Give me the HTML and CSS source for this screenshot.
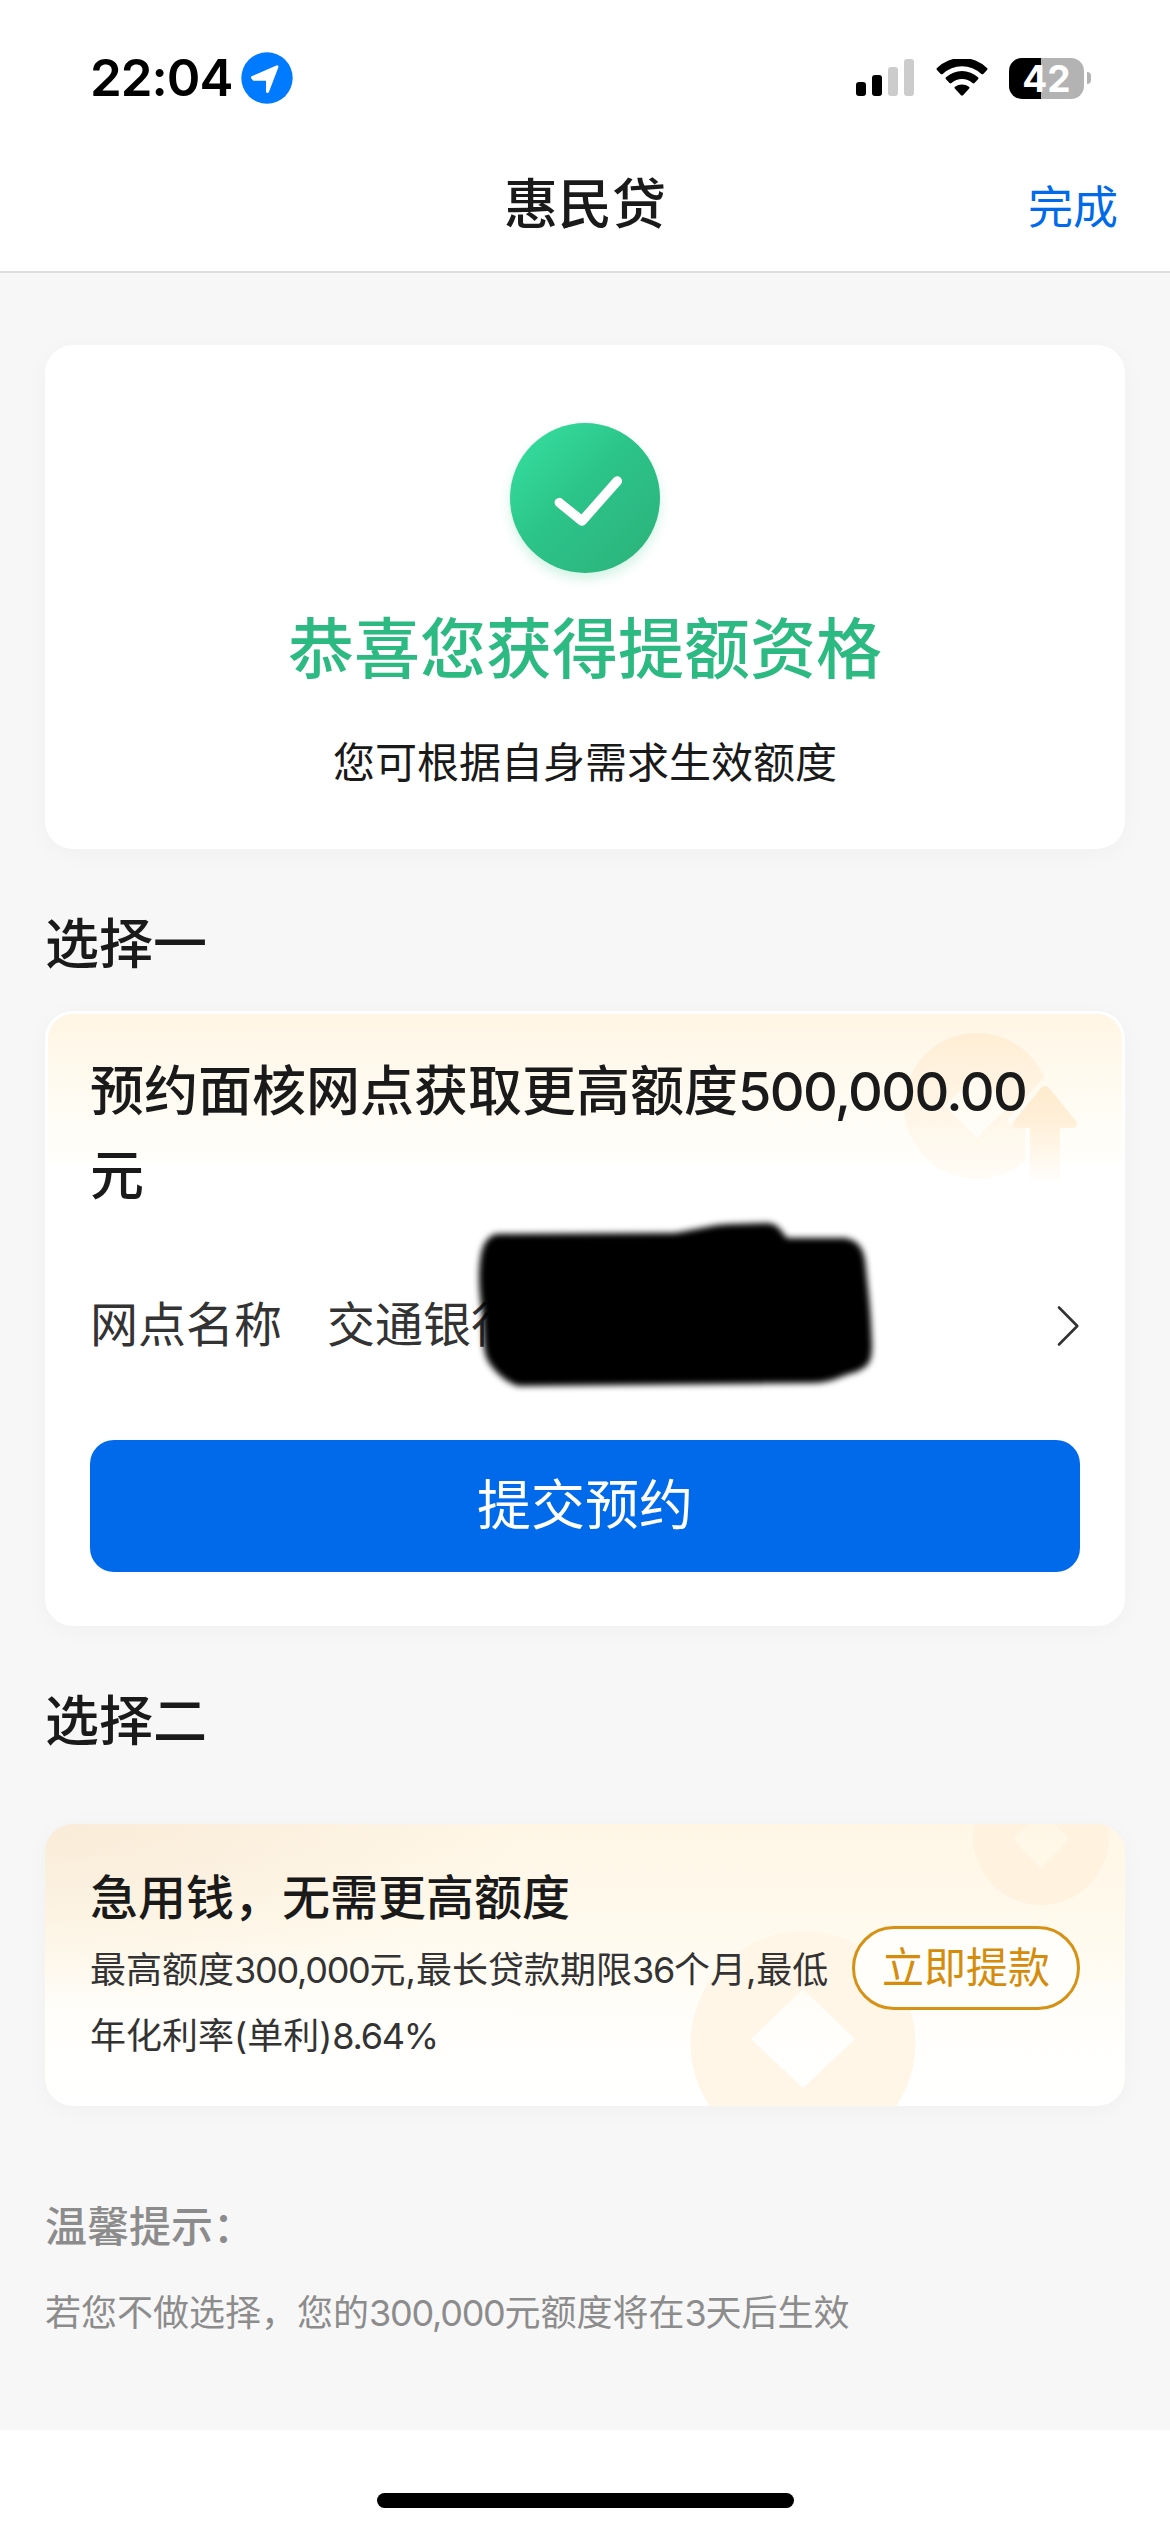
FILE: index.html
```html
<!DOCTYPE html>
<html lang="zh-CN">
<head>
<meta charset="utf-8">
<title>惠民贷</title>
<link rel="stylesheet" href="styles.css">
</head>
<body>
<header class="header">
  <div class="status">
    <div class="status-left">
      <span class="time">22:04</span>
      <svg class="location" width="52" height="52" viewBox="0 0 52 52">
        <circle cx="26" cy="26" r="25.7" fill="#007aff"/>
        <path d="M11.5 25.5 36 14.8 26.5 39.5V27.3H13Z" fill="#fff" stroke="#fff" stroke-width="3" stroke-linejoin="round"/>
      </svg>
    </div>
    <div class="status-right">
      <svg width="58" height="38" viewBox="0 0 58 38">
        <rect x="0" y="23" width="10" height="14" rx="3"/>
        <rect x="16" y="16" width="10" height="21" rx="3"/>
        <rect x="32" y="8" width="10" height="29" rx="3" fill="#ccc"/>
        <rect x="48" y="0" width="10" height="37" rx="3" fill="#ccc"/>
      </svg>
      <svg class="wifi" width="52" height="38" viewBox="0 0 52 38">
        <path d="M1 11Q0 10 1 9A36 36 0 0 1 51 9Q52 10 51 11L47.300 14.900Q46.300 15.800 45.300 14.900A28 28 0 0 0 6.700 14.900Q5.700 15.800 4.700 14.900Z"/>
        <path d="M10 20.300Q9 19.200 10 18.300A23.500 23.500 0 0 1 42 18.300Q43 19.200 42 20.300L38.500 24Q37.500 24.800 36.500 24A16 16 0 0 0 15.500 24Q14.500 24.800 13.500 24Z"/>
        <path d="M18.800 29.500Q17.900 28.500 19 27.800A12 12 0 0 1 33 27.800Q34.100 28.500 33.200 29.500L27 36.300Q26 37.200 25 36.300Z"/>
      </svg>
      <div class="battery"><span class="battery-body">42</span><i class="battery-cap"></i></div>
    </div>
  </div>
  <nav class="nav">
    <h1 class="nav-title">惠民贷</h1>
    <a class="nav-done">完成</a>
  </nav>
</header>

<main class="main">
  <section class="card result">
    <div class="result-icon">
      <svg width="150" height="150" viewBox="0 0 150 150"><path d="M49.300 79.600 72 98 107.300 58" fill="none" stroke="#fff" stroke-width="9.500" stroke-linecap="round" stroke-linejoin="round"/></svg>
    </div>
    <h2 class="result-title">恭喜您获得提额资格</h2>
    <p class="result-text">您可根据自身需求生效额度</p>
  </section>

  <h2 class="section-title first">选择一</h2>
  <section class="card booking">
    <svg class="decor" width="1080" height="180" viewBox="0 0 1080 180">
      <defs>
        <linearGradient id="coin" x1="0" y1="0" x2="0" y2="1"><stop offset="0" stop-color="#ffeed5"/><stop offset="1" stop-color="#fffcf6"/></linearGradient>
        <linearGradient id="arrow" x1="0" y1="0" x2="0" y2="1"><stop offset="0" stop-color="#ffebce"/><stop offset=".4" stop-color="#fff0da"/><stop offset="1" stop-color="#fffefb"/></linearGradient>
        <mask id="cut"><rect width="1080" height="180" fill="#fff"/><path d="M1000 72 1032 109H1015V175H985V109H968Z" fill="#000" stroke="#000" stroke-width="10" stroke-linejoin="round"/></mask>
      </defs>
      <path mask="url(#cut)" fill="url(#coin)" fill-rule="evenodd" d="M932 22a73 73 0 1 1 0 146a73 73 0 1 1 0-146ZM932 63 900 95 932 127 964 95Z"/>
      <path fill="url(#arrow)" d="M996 77Q1000 73 1004 77L1031 110Q1034 117 1027 117H1015V170H985V117H973Q966 117 969 110Z"/>
    </svg>
    <h3 class="booking-title">预约面核网点获取更高额度<span class="num">500,000.00</span><br>元</h3>
    <div class="branch">
      <span class="branch-label">网点名称</span>
      <span class="branch-value">交通银行</span>
      <svg class="chevron" width="24" height="42" viewBox="0 0 24 42"><path d="M3 2.500 21.300 21 3 39.500" fill="none" stroke="#333" stroke-width="2.600" stroke-linecap="round" stroke-linejoin="round"/></svg>
      <svg class="redaction" width="440" height="200" viewBox="0 0 440 200">
        <defs><filter id="soft" x="-10%" y="-15%" width="120%" height="130%"><feGaussianBlur stdDeviation="3"/></filter></defs>
        <path filter="url(#soft)" d="M36 35 L215 34 C245 29 255 25 275 25 L307 24 C319 25 320 31 327 39 L385 39 C401 42 405 53 406 70 C408 90 411 110 412 145 C412 165 408 167 396 173 C380 177 374 183 354 184 L60 187 C51 187 35 174 28 162 C22 151 24 135 22 112 C18 85 19 72 20 62 C22 45 27 38 36 35Z"/>
      </svg>
    </div>
    <button class="submit">提交预约</button>
  </section>

  <h2 class="section-title second">选择二</h2>
  <section class="card loan">
    <svg class="decor" width="1080" height="282" viewBox="0 0 1080 282">
      <path fill="#fff2df" fill-rule="evenodd" d="M996-54a67.500 67.500 0 1 1 0 135a67.500 67.500 0 1 1 0-135ZM996-14 971 11Q967 15 971 19L996 44 1021 19Q1025 15 1021 11Z"/>
      <path fill="#fff6e8" fill-rule="evenodd" d="M758 107a112.500 112.500 0 1 1 0 225a112.500 112.500 0 1 1 0-225ZM758 165 706 215 758 264 810 215Z"/>
    </svg>
    <div class="loan-info">
      <h3 class="loan-title">急用钱，无需更高额度</h3>
      <p class="loan-text">最高额度<span class="num">300,000</span>元,最长贷款期限<span class="num">36</span>个月,最低<br>年化利率(单利)<span class="num">8.64%</span></p>
    </div>
    <button class="withdraw">立即提款</button>
  </section>

  <h4 class="tips-title">温馨提示：</h4>
  <p class="tips-text">若您不做选择，您的<span class="num">300,000</span>元额度将在<span class="num">3</span>天后生效</p>
</main>
<footer class="footer"><div class="home-bar"></div></footer>
</body>
</html>
```
FILE: styles.css
```css
* { box-sizing: border-box; margin: 0; padding: 0; }
body {
  width: 1170px;
  height: 2532px;
  display: flex;
  flex-direction: column;
  background: #fff;
  color: #1a1a1a;
  font-family: Inter, "Noto Sans CJK SC", sans-serif;
  overflow: hidden;
}
svg { display: block; }
h1, h2, h3, h4 { font-weight: 500; }
button { font-family: inherit; }
.num { letter-spacing: -0.035em; }

.header { height: 273px; border-bottom: 2px solid #dedede; }
.status {
  height: 140px;
  padding: 16px 79px 0 90px;
  display: flex;
  align-items: center;
  justify-content: space-between;
}
.status-left { display: flex; align-items: center; gap: 10px; }
.time { width: 141px; font-size: 51px; font-weight: 600; line-height: 60px; letter-spacing: -1px; color: #000; white-space: nowrap; }
.status-right { display: flex; align-items: center; }
.wifi { margin: 0 21px 0 22px; }
.battery { display: flex; align-items: center; gap: 3px; }
.battery-body {
  width: 75px;
  height: 41px;
  border-radius: 13px;
  background: linear-gradient(90deg, #000 32px, #b3b3b3 32px);
  color: #fff;
  font-size: 37px;
  font-weight: 700;
  line-height: 41px;
  text-align: center;
}
.battery-cap { width: 4px; height: 12px; border-radius: 0 5px 5px 0; background: #b3b3b3; }

.nav {
  height: 131px;
  padding: 0 52px;
  display: grid;
  grid-template-columns: 1fr auto 1fr;
  align-items: center;
}
.nav-title { grid-column: 2; font-size: 54px; line-height: 72px; padding-bottom: 2px; }
.nav-done { justify-self: end; font-size: 45px; line-height: 60px; color: #006aeb; padding-top: 5px; }

.main {
  height: 2157px;
  padding: 72px 45px 0;
  background: #f7f7f7;
}
.card {
  position: relative;
  border-radius: 28px;
  background: #fff;
  box-shadow: 0 4px 24px rgba(0, 0, 0, 0.03);
}
.decor { position: absolute; left: 0; top: 0; }

.result {
  height: 504px;
  padding-top: 78px;
  display: flex;
  flex-direction: column;
  align-items: center;
}
.result-icon {
  border-radius: 50%;
  background: linear-gradient(135deg, #34dc9c 10%, #2cc489 45%, #2cb67e 85%);
  box-shadow: 0 6px 12px rgba(44, 200, 138, 0.22);
}
.result-title { margin-top: 30px; font-size: 66px; line-height: 92px; color: #2cba82; }
.result-text { margin-top: 38px; font-size: 42px; line-height: 60px; }

.section-title { font-size: 54px; line-height: 76px; }
.first { margin: 58px 0 28px; }
.second { margin: 58px 0 64px; }

.booking {
  height: 615px;
  border: 3px solid #fff;
  padding: 36px 42px 0;
  background: linear-gradient(180deg, #fff5e4 0, #fffcf4 95px, #fffefb 148px, #fff 150px);
}
.booking .decor { left: -3px; top: -3px; }
.booking-title { position: relative; font-size: 54px; line-height: 84px; }
.booking-title .num { letter-spacing: -0.03em; }
.branch {
  position: relative;
  height: 132px;
  margin-top: 42px;
  display: flex;
  align-items: center;
  gap: 45px;
  font-size: 48px;
  line-height: 66px;
  color: #333;
}
.branch-label, .branch-value { padding-bottom: 2px; }
.chevron { margin-left: auto; }
.redaction { position: absolute; left: 370px; top: -61px; }
.submit {
  display: block;
  width: 990px;
  height: 132px;
  margin-top: 48px;
  border: 0;
  border-radius: 24px;
  background: #006aeb;
  color: #fff;
  font-size: 54px;
  line-height: 132px;
}

.loan {
  height: 282px;
  padding: 0 45px;
  display: flex;
  justify-content: space-between;
  background:
    radial-gradient(ellipse 480px 180px at 0 0, rgba(246, 230, 208, 0.65), rgba(246, 230, 208, 0)),
    linear-gradient(180deg, #fff6e6 0, #fffaee 40%, #fffefb 70%, #fff 100%);
  overflow: hidden;
}
.loan-info { position: relative; padding-top: 40px; }
.loan-title { font-size: 48px; line-height: 68px; }
.loan-text { font-size: 36px; line-height: 66px; color: #333; white-space: nowrap; margin-top: 5px; }
.withdraw {
  position: relative;
  width: 228px;
  height: 84px;
  margin-top: 102px;
  border: 3px solid #d59215;
  border-radius: 42px;
  background: #fffefb;
  color: #d58c0c;
  font-size: 42px;
  line-height: 78px;
}

.tips-title { margin-top: 91px; font-size: 42px; line-height: 60px; color: #8c8c8c; }
.tips-text { margin-top: 31px; font-size: 36px; line-height: 50px; color: #8c8c8c; }

.footer { height: 102px; display: flex; justify-content: center; padding-top: 63px; }
.home-bar { width: 417px; height: 15px; border-radius: 8px; background: #000; }
```
